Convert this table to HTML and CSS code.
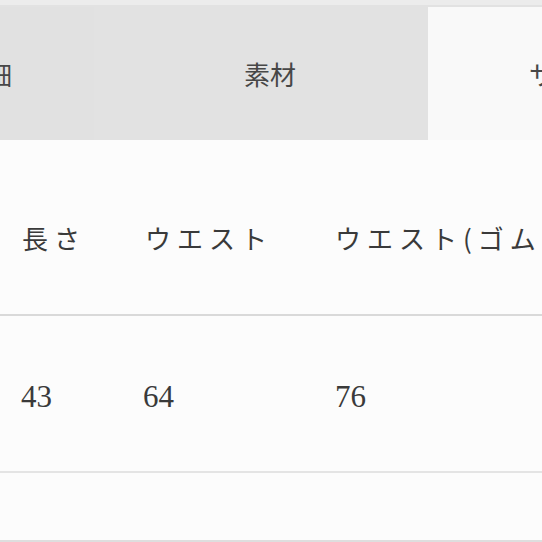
FILE: index.html
```html
<!DOCTYPE html>
<html lang="ja">
<head>
<meta charset="utf-8">
<link rel="stylesheet" href="styles.css">
</head>
<body>
<div class="topbar"></div>
<nav class="tabs">
  <div class="tab tab-first">詳細</div>
  <div class="tab tab-mid">素材</div>
  <div class="tab tab-active">サイズ</div>
</nav>
<div class="table">
  <div class="row head">
    <div class="cell">長さ</div>
    <div class="cell">ウエスト</div>
    <div class="cell">ウエスト(ゴム</div>
  </div>
  <div class="row data">
    <div class="cell">43</div>
    <div class="cell">64</div>
    <div class="cell">76</div>
  </div>
  <div class="row empty"></div>
</div>
</body>
</html>
```
FILE: styles.css
```css
html, body {
  margin: 0;
  padding: 0;
  background: #fcfcfc;
  overflow: hidden;
}
body {
  width: 542px;
  height: 542px;
  font-family: "Noto Sans CJK JP", "Noto Sans", sans-serif;
  color: #3a3a3a;
}
.topbar {
  height: 5px;
  background: #ececec;
  border-bottom: 2px solid #e2e2e2;
}
.tabs {
  display: flex;
  height: 133px;
  white-space: nowrap;
}
.tab {
  display: flex;
  align-items: center;
  font-size: 26px;
  color: #474747;
  flex: none;
  line-height: 1;
}
.tab-first {
  margin-left: -181px;
  padding: 0 82px 0 141px;
  background: #e1e1e1;
}
.tab-mid {
  padding: 0 132px 0 150px;
  background: #e2e2e2;
}
.tab-active {
  padding-left: 101px;
  background: #f9f9f9;
  flex: 1;
}
.table {
  display: flex;
  flex-direction: column;
}
.row {
  display: grid;
  grid-template-columns: 123px 190px 1fr;
  padding-left: 22px;
  align-items: center;
  white-space: nowrap;
}
.head {
  height: 154px;
  padding-top: 20px;
  border-bottom: 2px solid #d9d9d9;
  font-size: 26px;
  letter-spacing: 6px;
  color: #3a3a3a;
}
.data {
  border-bottom: 2px solid #e4e4e4;
  font-family: "Liberation Serif", "DejaVu Serif", serif;
  font-size: 31px;
  color: #3a3a3a;
  padding-top: 6px;
  box-sizing: border-box;
  height: 157px;
}
.data .cell:first-child { margin-left: -1px; }
.data .cell:nth-child(2) { margin-left: -2px; }
.empty {
  height: 67px;
  border-bottom: 2px solid #dedede;
}
```
